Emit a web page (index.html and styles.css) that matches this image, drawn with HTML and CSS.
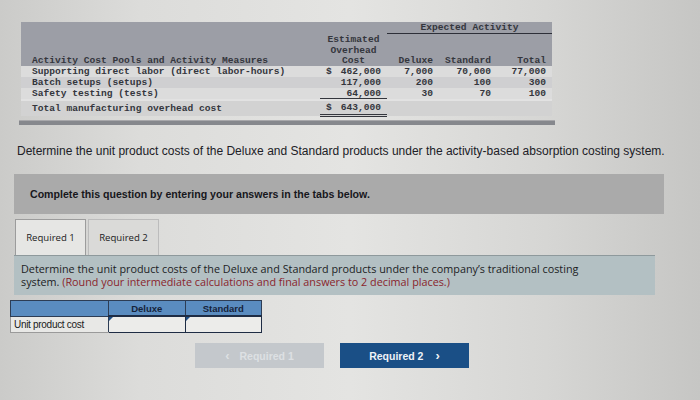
FILE: index.html
```html
<!DOCTYPE html>
<html>
<head>
<meta charset="utf-8">
<link rel="stylesheet" href="styles.css">
</head>
<body>
<div class="page">
  <div class="data">
    <table class="act">
      <colgroup>
        <col class="c-label"><col class="c-cost"><col class="c-dlx"><col class="c-std"><col class="c-tot">
      </colgroup>
      <tr class="hd">
        <td></td><td></td>
        <td colspan="3" class="exp"><span>Expected Activity</span></td>
      </tr>
      <tr class="hd"><td></td><td class="ctr">Estimated</td><td></td><td></td><td></td></tr>
      <tr class="hd"><td></td><td class="ctr">Overhead</td><td></td><td></td><td></td></tr>
      <tr class="hd last">
        <td class="lbl">Activity Cost Pools and Activity Measures</td>
        <td class="ctr">Cost</td>
        <td class="num">Deluxe</td><td class="num">Standard</td><td class="num">Total</td>
      </tr>
      <tr class="r1">
        <td class="lbl">Supporting direct labor (direct labor-hours)</td>
        <td class="num"><span class="dol">$</span>462,000</td>
        <td class="num">7,000</td><td class="num">70,000</td><td class="num">77,000</td>
      </tr>
      <tr class="r2">
        <td class="lbl">Batch setups (setups)</td>
        <td class="num">117,000</td>
        <td class="num">200</td><td class="num">100</td><td class="num">300</td>
      </tr>
      <tr class="r1">
        <td class="lbl">Safety testing (tests)</td>
        <td class="num under">64,000</td>
        <td class="num">30</td><td class="num">70</td><td class="num">100</td>
      </tr>
      <tr class="tot">
        <td class="lbl">Total manufacturing overhead cost</td>
        <td class="num dbl"><span class="dol">$</span>643,000</td>
        <td></td><td></td><td></td>
      </tr>
    </table>
    <div class="rule"></div>
  </div>

  <p class="q">Determine the unit product costs of the Deluxe and Standard products under the activity-based absorption costing system.</p>

  <div class="note">Complete this question by entering your answers in the tabs below.</div>

  <div class="tabs">
    <div class="tab active">Required 1</div>
    <div class="tab">Required 2</div>
  </div>

  <div class="instr">Determine the unit product costs of the Deluxe and Standard products under the company’s traditional costing system. <span class="red">(Round your intermediate calculations and final answers to 2 decimal places.)</span></div>

  <table class="ans">
    <tr class="ah"><th></th><th>Deluxe</th><th>Standard</th></tr>
    <tr><td class="al">Unit product cost</td><td class="in"></td><td class="in"></td></tr>
  </table>

  <div class="nav">
    <div class="btn prev"><span class="chev">&lsaquo;</span>Required 1</div>
    <div class="btn next">Required 2<span class="chev r">&rsaquo;</span></div>
  </div>
</div>
</body>
</html>
```

FILE: styles.css
```css
html, body {
  margin: 0;
  padding: 0;
}
body {
  width: 700px;
  height: 400px;
  overflow: hidden;
  background: linear-gradient(90deg, #cbcbc9 0%, #dcdcda 20%, #e4e4e2 50%, #d6d6d4 78%, #c6c6c4 100%);
  font-family: "Liberation Sans", Arial, sans-serif;
  color: #1e1e24;
}
.page {
  padding-top: 22px;
}
.data {
  padding-left: 21px;
  width: 534px;
}
.act {
  border-collapse: collapse;
  table-layout: fixed;
  width: 531px;
  font-family: "Liberation Mono", "Courier New", monospace;
  font-size: 9.6px;
  font-weight: bold;
  color: #34363d;
}
.c-label { width: 299px; }
.c-cost { width: 67px; }
.c-dlx { width: 52px; }
.c-std { width: 58px; }
.c-tot { width: 55px; }
.act td {
  padding: 0 6px 0 0;
  height: 11px;
  line-height: 11px;
  white-space: nowrap;
}
.act td.lbl { padding-left: 11px; }
.hd td { background: #9c9ea6; }
.hd.last td { height: 10px; line-height: 10px; }
.exp {
  text-align: center;
  padding: 0 !important;
}
.exp span {
  display: block;
  border-bottom: 1px solid #2d2f38;
  line-height: 11px;
}
.ctr { text-align: center; padding: 0 !important; }
.num { text-align: right; }
.dol { float: left; padding-left: 6px; }
.r1 td { background: #dcdcdc; }
.r2 td { background: #cfcfd1; }
.under { box-shadow: inset 0 -1px 0 #34363d; }
.tot td {
  background: #d2d2d2;
  height: 13px;
  line-height: 13px;
  border-top: 2px solid #e2e2e2;
}
.dbl { border-bottom: 3px double #34363d; }
.rule {
  height: 4px;
  margin-top: 3px;
  width: 536px;
  margin-left: -2px;
  background: #86888d;
  border-top: 1px solid #a8a8ab;
}
.q {
  margin: 19px 0 0 17px;
  font-size: 12px;
  color: #202026;
}
.note {
  margin: 16px 0 0 14px;
  width: 634px;
  height: 40px;
  padding-left: 16px;
  display: flex;
  align-items: center;
  background: #aaaaaa;
  font-size: 10.6px;
  font-weight: bold;
  color: #17171c;
}
.tabs {
  display: flex;
  margin: 5px 0 0 15px;
  gap: 2px;
}
.tab {
  width: 69px;
  height: 35px;
  display: flex;
  align-items: center;
  justify-content: center;
  border: 1px solid #bcbcbc;
  border-bottom: none;
  background: #dadad8;
  font-family: "Open Sans", sans-serif;
  font-size: 9.6px;
  color: #1b1b22;
}
.tab.active {
  background: #e6e6e4;
  border-color: #9c9c9c;
}
.instr {
  margin: 0 0 0 14px;
  width: 641px;
  height: 40px;
  box-sizing: border-box;
  padding: 6px 62px 0 7px;
  background: #b3c0c3;
  border-top: 1px solid #8e999c;
  font-family: "Open Sans", sans-serif;
  font-size: 10.8px;
  line-height: 13px;
  color: #1c1d24;
}
.red { color: #8a1f2c; }
.ans {
  margin: 5px 0 0 10px;
  border-collapse: collapse;
  table-layout: fixed;
  width: 252px;
  font-size: 9.5px;
}
.ans th {
  background: #5a8cc0;
  height: 14px;
  padding: 0;
  border: 1px solid #2d3d55;
  font-weight: bold;
  color: #16233a;
}
.ans th:first-child { width: 97px; }
.ans td {
  height: 15px;
  padding: 0;
  border: 1px solid #2d3d55;
  background: #e8e8e6;
}
.ans td.al {
  padding-left: 3px;
  font-size: 10px;
  color: #1a1a20;
  letter-spacing: -0.3px;
  border-color: #9a9a9a #2d3d55 #9a9a9a #9a9a9a;
}
.ans td.in {
  background: #ececea;
  border: 1px solid #1e2c44;
  border-top-width: 2px;
  position: relative;
}
.ans td.in::before {
  content: "";
  position: absolute;
  left: 0;
  top: 0;
  border-top: 4px solid #1e4f86;
  border-right: 4px solid transparent;
}
.nav {
  display: flex;
  gap: 16px;
  margin: 10px 0 0 195px;
}
.btn {
  width: 129px;
  height: 25px;
  display: flex;
  align-items: center;
  justify-content: center;
  font-size: 10.5px;
  font-weight: bold;
}
.chev {
  font-size: 13px;
  margin-right: 10px;
}
.chev.r {
  margin-right: 0;
  margin-left: 12px;
}
.prev {
  background: #c4c8cc;
  color: #dde0e3;
}
.next {
  background: #1a4f86;
  color: #eef2f7;
}
```
